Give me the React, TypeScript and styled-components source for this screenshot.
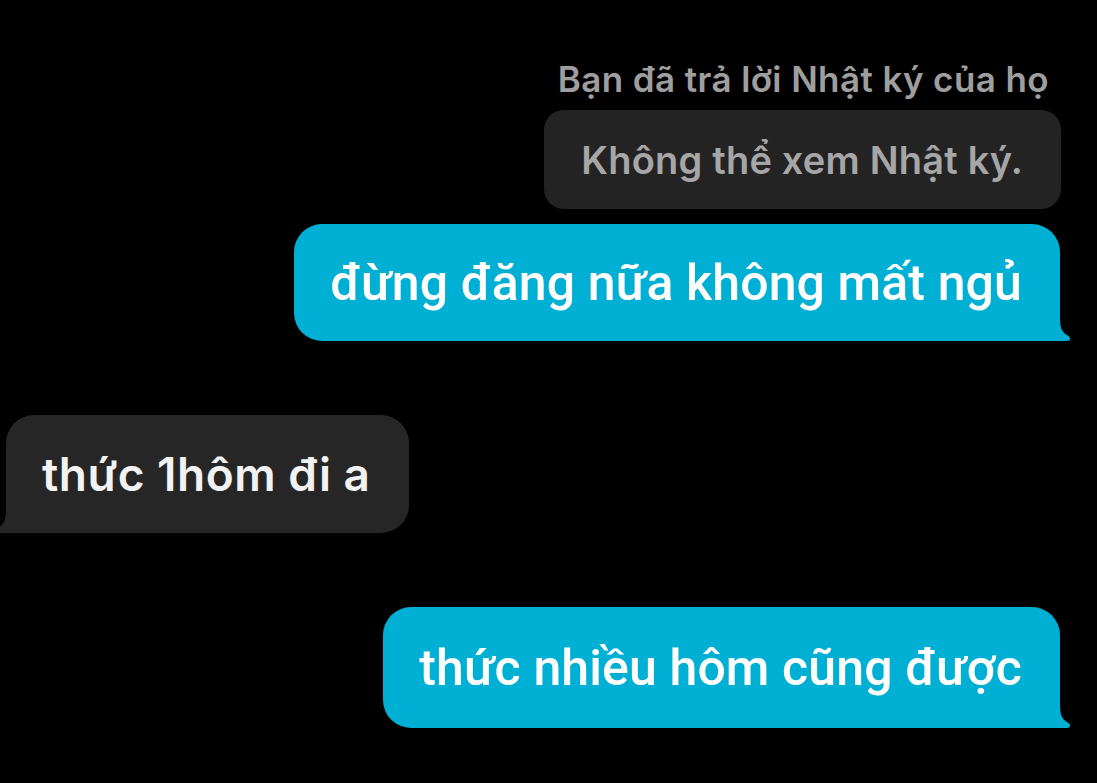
import React from "react";
import styled, { createGlobalStyle } from "styled-components";

const Global = createGlobalStyle`
  html, body { margin: 0; padding: 0; background: #000; }
  body { width: 1097px; height: 783px; overflow: hidden; }
`;

const Screen = styled.div`
  width: 1097px;
  height: 783px;
  background: #000;
  display: flex;
  flex-direction: column;
  padding-top: 59px;
  box-sizing: border-box;
`;

const Caption = styled.div`
  align-self: flex-end;
  margin-right: 48px;
  font-family: Inter, "Noto Sans", sans-serif;
  font-weight: 600;
  font-size: 35px;
  line-height: 40px;
  color: #9e9e9e;
  letter-spacing: 0.4px;
`;

const ReplyBubble = styled.div`
  align-self: flex-end;
  margin-top: 11px;
  margin-right: 36px;
  height: 99px;
  box-sizing: border-box;
  padding: 0 38px 0 37px;
  display: flex;
  align-items: center;
  background: #232323;
  border-radius: 20px;
  font-family: Inter, "Noto Sans", sans-serif;
  font-weight: 600;
  font-size: 38px;
  color: #a6a6a6;
  letter-spacing: 0.2px;
`;

const Row = styled.div<{ $side: "left" | "right"; $gap: number }>`
  display: flex;
  justify-content: ${(p) => (p.$side === "right" ? "flex-end" : "flex-start")};
  padding: ${(p) => (p.$side === "right" ? "0 37px 0 0" : "0 0 0 6px")};
  margin-top: ${(p) => p.$gap}px;
`;

const Bubble = styled.div<{ $kind: "me" | "them"; $h: number }>`
  position: relative;
  height: ${(p) => p.$h}px;
  box-sizing: border-box;
  display: flex;
  align-items: center;
  padding: 0 38px 0 36px;
  background: ${(p) => (p.$kind === "me" ? "#00afd4" : "#262626")};
  color: ${(p) => (p.$kind === "me" ? "#ffffff" : "#f2f2f2")};
  border-radius: ${(p) =>
    p.$kind === "me" ? "28px 28px 0 28px" : "28px 28px 28px 0"};
  font-family: ${(p) =>
    p.$kind === "me" ? "Roboto, 'Noto Sans', sans-serif" : "Inter, 'Noto Sans', sans-serif"};
  font-weight: ${(p) => (p.$kind === "me" ? 500 : 600)};
  font-size: ${(p) => (p.$kind === "me" ? "50px" : "46px")};
  letter-spacing: ${(p) => (p.$kind === "me" ? "0.12px" : "0.5px")};
  white-space: nowrap;
`;

const Tail = styled.svg<{ $side: "left" | "right" }>`
  position: absolute;
  bottom: 0;
  width: 20px;
  height: 24px;
  ${(p) => (p.$side === "right" ? "right: -12px;" : "left: -12px; transform: scaleX(-1);")}
`;

const TailShape = ({ side, color }: { side: "left" | "right"; color: string }) => (
  <Tail $side={side} viewBox="0 0 20 24">
    <path
      d="M0 0 H8 C8 10 9.5 15 15 18 C19.5 20.5 19 24 14.5 24 H0 Z"
      fill={color}
    />
  </Tail>
);

export default function App() {
  return (
    <>
      <Global />
      <Screen>
        <Caption>Bạn đã trả lời Nhật ký của họ</Caption>
        <ReplyBubble>Không thể xem Nhật ký.</ReplyBubble>
        <Row $side="right" $gap={15}>
          <Bubble $kind="me" $h={117}>
            đừng đăng nữa không mất ngủ
            <TailShape side="right" color="#00afd4" />
          </Bubble>
        </Row>
        <Row $side="left" $gap={74}>
          <Bubble $kind="them" $h={118}>
            thức 1hôm đi a
            <TailShape side="left" color="#262626" />
          </Bubble>
        </Row>
        <Row $side="right" $gap={74}>
          <Bubble $kind="me" $h={121}>
            thức nhiều hôm cũng được
            <TailShape side="right" color="#00afd4" />
          </Bubble>
        </Row>
      </Screen>
    </>
  );
}
